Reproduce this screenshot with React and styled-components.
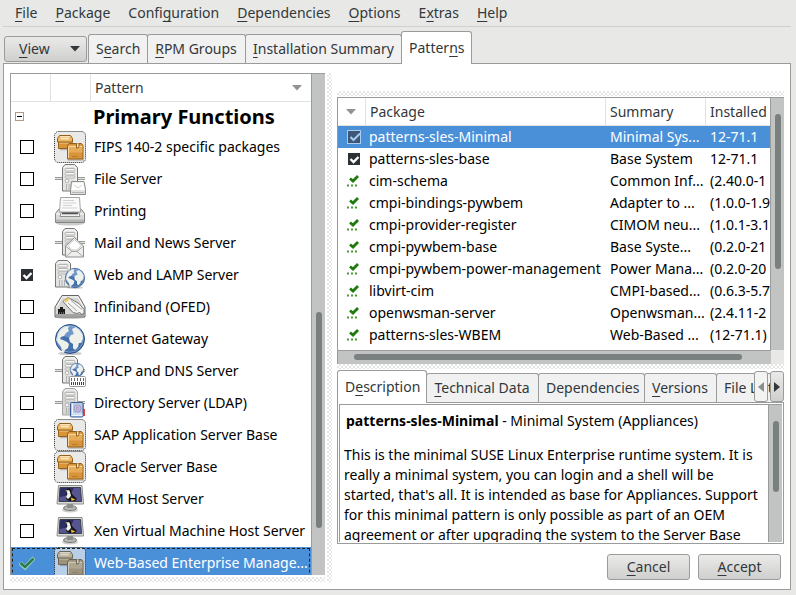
import React, { useState } from "react";
import styled, { createGlobalStyle, css } from "styled-components";

const line = "#9a9c9b";
const grey = "#e8e8e6";
const blue = "#4a90d9";
const ink = "#32383b";

const Global = createGlobalStyle`
  * { box-sizing: border-box; }
  body { margin: 0; background: ${grey}; }
  body, button, input { font: 14px/20px "Noto Sans", "Open Sans", sans-serif; }
  table { border-collapse: separate; border-spacing: 0; table-layout: fixed; width: 100%; }
  u { text-decoration: underline; text-decoration-thickness: 1px; text-underline-offset: 3px; text-decoration-skip-ink: none; }
`;

const Window = styled.div`
  display: flex;
  flex-direction: column;
  height: 100vh;
  padding: 0 5px 5px 3px;
  color: ${ink};
`;

const MenuBar = styled.nav`
  display: flex;
  align-items: flex-start;
  height: 27px;
  flex: none;
  padding: 3px 0 0 3px;
  border-bottom: 1px solid #d0d0ce;
`;

const MenuItem = styled.button`
  height: 20px;
  border: 0;
  padding: 0 9px;
  background: none;
  color: ${ink};
`;

const TabBar = styled.div`
  display: flex;
  align-items: flex-end;
  flex: none;
  height: 37px;
  margin-bottom: -1px;
  position: relative;
`;

const Tab = styled.button`
  flex: none;
  height: ${(p) => (p.$active ? 33 : 29)}px;
  margin-bottom: ${(p) => (p.$active ? 0 : 1)}px;
  margin-left: -1px;
  padding: 0 8px 0 7px;
  border: 1px solid ${line};
  border-bottom: 0;
  border-radius: 3px 3px 0 0;
  background: ${(p) => (p.$active ? "#fff" : "#f1f1f1")};
  color: ${ink};
  white-space: nowrap;
  width: ${(p) => (p.$w ? p.$w + "px" : "auto")};
`;

const raised = css`
  border: 1px solid ${line};
  border-radius: 3px;
  background: linear-gradient(#eaeae9, #cfcfcd);
  color: ${ink};
`;

const ViewButton = styled.button`
  ${raised}
  display: flex;
  align-items: center;
  justify-content: space-between;
  width: 83px;
  height: 26px;
  margin: 0 2px 2px 1px;
  padding: 0 6px 0 14px;
`;

const PushButton = styled.button`
  ${raised}
  width: 83px;
  height: 26px;
  padding: 0;
`;

const Panel = styled.main`
  flex: 1;
  min-height: 0;
  display: flex;
  padding: 9px 6px 7px;
  border: 1px solid ${line};
  background: #fff;
`;

const dots = css`
  background-color: #e6e6e4;
  background-image: radial-gradient(circle at 1px 1px, #fff 1px, transparent 1px),
    radial-gradient(circle at 1px 1px, #fff 1px, transparent 1px);
  background-size: 4px 4px;
  background-position: 0 0, 2px 2px;
`;

const Grip = styled.div`
  ${dots}
  flex: none;
  height: 5px;
`;

const SplitHandle = styled.div`
  ${dots}
  flex: none;
  width: 5px;
  margin: 0 5px 0 2px;
`;

const LeftPane = styled.section`
  display: flex;
  flex-direction: column;
  flex: 0 0 41%;
  max-width: 315px;
  gap: 2px;
`;

const ListFrame = styled.div`
  display: flex;
  flex: 1;
  min-height: 0;
  border-top: 1px solid ${line};
  border-left: 1px solid ${line};
`;

const ListBody = styled.div`
  flex: 1;
  min-width: 0;
  overflow: hidden;
  color: #000;
`;

const VTrack = styled.div`
  display: flex;
  flex-direction: column;
  align-items: center;
  flex: none;
  width: 14px;
  border-left: 1px solid ${line};
  background: #c2c4c3;
  padding-top: ${(p) => p.$from}px;
`;

const VThumb = styled.div`
  width: 6px;
  height: ${(p) => p.$size}px;
  border-radius: 3px;
  background: #7a7f7f;
`;

const HRow = styled.div`
  display: flex;
  flex: none;
  height: 14px;
  border-left: 1px solid ${line};
`;

const HTrack = styled.div`
  flex: 1;
  padding: 3px 29px 0 16px;
  border-top: 1px solid ${line};
  background: #c2c4c3;
`;

const HThumb = styled.div`
  height: 6px;
  border-radius: 3px;
  background: #7a7f7f;
`;

const Corner = styled.div`
  width: 13px;
  background: ${grey};
`;

const Th = styled.th`
  height: 28px;
  padding: 0 0 0 4px;
  border-right: 1px solid #e2e2e0;
  border-bottom: 1px solid #e2e2e0;
  font-weight: 400;
  text-align: left;
  color: ${ink};
  white-space: nowrap;
  &:last-child { border-right: 0; }
`;

const HeadFlex = styled.div`
  display: flex;
  align-items: center;
  justify-content: space-between;
  padding-right: ${(p) => p.$right}px;
`;

const PatternRow = styled.tr`
  height: 32px;
  ${(p) => p.$on && css`background: ${blue}; color: #fff; outline: 1px dashed #222; outline-offset: -2px;`}
`;

const GroupRow = styled.tr`
  height: 29px;
`;

const GroupName = styled.td`
  padding: 0 0 0 2px;
  font: 700 20px/28px "Noto Sans", "Open Sans", sans-serif;
  white-space: nowrap;
`;

const Cell = styled.td`
  height: inherit;
  padding: 0 0 0 ${(p) => p.$left || 3}px;
  white-space: nowrap;
  svg { display: block; }
`;

const PackageRow = styled.tr`
  height: 22px;
  ${(p) => p.$on && css`background: ${blue}; color: #fff;`}
`;

const Check = styled.label`
  display: grid;
  width: 16px;
  height: 16px;
  place-items: center;
  input, svg { grid-area: 1 / 1; }
  svg { pointer-events: none; }
`;

const Box = styled.input`
  appearance: none;
  width: 14px;
  height: 14px;
  margin: 0;
  ${(p) => p.$kind === "box" && css`
    border: 1px solid #000;
    background: #fff;
    &:checked { border-color: #fff; background: #2b3135; }
  `}
  ${(p) => p.$kind === "boxOn" && css`
    border: 1px solid #a9cdf2;
    background: #3d5877;
  `}
`;

const Expander = styled.button`
  display: grid;
  place-items: center;
  width: 9px;
  height: 9px;
  margin-left: 1px;
  padding: 0;
  border: 1px solid #b09a80;
  background: #fff;
`;

const Minus = styled.span`
  width: 5px;
  height: 1px;
  background: #000;
`;

const RightPane = styled.section`
  display: flex;
  flex-direction: column;
  flex: 1;
  min-width: 0;
  padding: 18px 0 0;
`;

const TableFrame = styled(ListFrame)`
  margin-top: 1px;
`;

const DetailTabs = styled.div`
  display: flex;
  align-items: flex-end;
  flex: none;
  height: 33px;
  margin: 1px 0 -1px;
  padding-left: 1px;
  overflow: hidden;
  position: relative;
`;

const TabArrows = styled.div`
  position: absolute;
  right: 0;
  top: 1px;
  display: flex;
  gap: 2px;
`;

const ArrowButton = styled.button`
  ${raised}
  display: grid;
  place-items: center;
  width: 14px;
  height: 31px;
  padding: 0;
  &:disabled { background: #f3f3f2; }
`;

const DetailFrame = styled.div`
  display: flex;
  flex: none;
  height: 142px;
  padding: 1px;
  border: 1px solid ${line};
`;

const DetailInner = styled.article`
  display: flex;
  flex: 1;
  min-width: 0;
  border-top: 1px solid ${line};
  border-left: 1px solid ${line};
  color: #000;
`;

const DetailText = styled.div`
  flex: 1;
  overflow: hidden;
  padding: 6px 0 0 4px;
  white-space: nowrap;
  p { margin: 0; }
`;

const DetailTitle = styled.p`
  && { padding: 0 0 0 2px; margin-bottom: 14px; }
`;

const Actions = styled.footer`
  display: flex;
  justify-content: flex-end;
  gap: 8px;
  flex: none;
  padding: 10px 3px 2px;
`;

const Down = ({ c = ink }) => (
  <svg width="10" height="6" viewBox="0 0 10 6"><path d="M0 0h10L5 5.5z" fill={c} /></svg>
);

const Side = ({ left }) => (
  <svg width="6" height="10" viewBox="0 0 6 10">
    <path d={left ? "M6 0v10L0 5z" : "M0 0v10l6-5z"} fill={left ? "#8a8e8f" : ink} />
  </svg>
);

const marks = {
  box: <svg width="14" height="14"><path d="M3.5 7l3 3 5-5" fill="none" stroke="#fff" strokeWidth="2.4" /></svg>,
  boxOn: <svg width="14" height="14"><path d="M3.5 7l3 3L13 3.500" fill="none" stroke="#a9cdf2" strokeWidth="2" /></svg>,
  auto: (
    <svg width="16" height="16">
      <path d="M4 5.500L7 8l5-5" fill="none" stroke="#1f7a0c" strokeWidth="2.800" />
      <path d="M1 11.500h2v2h-2zM5 11.500h2v2h-2zM9 11.500h2v2h-2z" fill="#4a9a35" />
    </svg>
  ),
  green: (
    <svg width="16" height="16">
      <path d="M1 8l5 4.500L15 3" fill="none" stroke="#a5d8c4" strokeWidth="4" />
      <path d="M1.500 8L6 12l8.500-8.500" fill="none" stroke="#2a7c4c" strokeWidth="2.500" />
    </svg>
  ),
};

function Tick({ kind, on, label }) {
  const [checked, setChecked] = useState(on);
  return (
    <Check>
      <Box type="checkbox" $kind={kind} checked={checked} aria-label={label} onChange={() => setChecked(!checked)} />
      {checked && marks[kind]}
    </Check>
  );
}

function PackageIcon({ dull }) {
  const [dark, mid, lite, hi] = dull
    ? ["#6b6554", "#9d937d", "#b9b09c", "#d8d2c5"]
    : ["#94601a", "#d9943a", "#ecb868", "#fbe3b4"];
  return (
    <>
      <rect x="0.5" y="0.5" width="31" height="31" rx="4" fill={dull ? "#b9cfe8" : "#e9e9e8"} stroke="#222" strokeDasharray="1 1" />
      <path d="M6 18.500h8M14 29h16" stroke="#000" strokeWidth="1.500" opacity="0.2" />
      <g stroke={dark}>
        <path d="M4.500 10.500h13.500v7H4.500z" fill={mid} />
        <path d="M5 12h12.500" stroke={hi} opacity="0.7" />
        <path d="M3.500 7.500L5.500 4.500h11l2 3v3.500h-15z" fill={lite} />
        <path d="M6 5.500h10" stroke={hi} />
        <path d="M6.500 7.500h8.500" stroke={hi} strokeWidth="2" />
        <path d="M13.500 14.500l1.500-2h12.500l1.500 2v13.500H13.500z" fill={mid} />
        <path d="M14 14.500h14.500v7H14z" fill={lite} stroke="none" opacity="0.65" />
        <path d="M14.500 15.500h13.500M14.500 16v11" fill="none" stroke={hi} opacity="0.8" />
        <path d="M22.500 12.500v4.500h1.500l1-1.500v-3" fill={hi} />
        <path d="M18 25.500h6" stroke={dark} opacity="0.45" />
      </g>
    </>
  );
}

const Cable = () => (
  <>
    <path d="M1 15.500h30" stroke="#999b99" strokeWidth="3" />
    <path d="M1 15.500h30" stroke="#e2e3e1" />
  </>
);

function Tower({ x = 8, pale }) {
  const edge = pale ? "#a5a7a5" : "#747674";
  return (
    <g transform={`translate(${x} 1)`}>
      <path d="M.5 3.500L3 .5h9.500l3 3V27H.5z" fill={pale ? "#d5d6d4" : "#e4e5e3"} stroke={edge} />
      <path d="M2 4l2-2h8l2 2v21" fill="none" stroke="#fafafa" />
      <g fill="#f7f7f6" stroke="#b3b5b2">
        <rect x="3" y="4.500" width="10" height="2.500" rx="1" />
        <rect x="3" y="8.500" width="10" height="2.500" rx="1" />
        <rect x="3" y="12" width="10" height="2" rx="1" />
        <circle cx="5" cy="17" r="1.800" />
      </g>
      <path d="M4.500 20v6M7 20v6M9.500 20v6" stroke="#b0b2af" />
    </g>
  );
}

function Globe({ cx, cy, r }) {
  const k = r / 15;
  return (
    <g transform={`translate(${cx} ${cy}) scale(${k})`}>
      <ellipse cx="0" cy="14.500" rx="12" ry="2" fill="#000" opacity="0.2" />
      <circle r="14.500" fill="#4470ac" stroke="#2b4f85" />
      <path d="M-13-4A13.500 13.500 0 0 1 13-4Q5 1 0-1T-13-4" fill="#8fb0dc" opacity="0.6" />
      <path d="M-12-6q2-5 7-7l4 0-1 3 1 2-3 2-2 3-3 1-1 2 3 1 4 2 2 2-1 4-3 2-1 3-2-1-1-5-3-4-2-3z" fill="#eef0ec" />
      <path d="M2-10l4-2 4 3 3 5v4l-2 4-2 0-1 4-3 3-2-2 0-4-3-2-1-4 2-3 3-1-1-2z" fill="#eef0ec" />
      <circle r="13.200" fill="none" stroke="#a9c4e6" opacity="0.5" />
    </g>
  );
}

const Screen = () => (
  <>
    <ellipse cx="16" cy="27" rx="8" ry="2.500" fill="#555" opacity="0.3" />
    <ellipse cx="16" cy="25" rx="6.500" ry="2.500" fill="#b5b8b3" stroke="#777a76" />
    <path d="M13 21h6v4h-6z" fill="#8c8f8b" />
    <path d="M4.500 2.500h23.500l1.500 18.500h-26.500z" fill="#d9dbd7" stroke="#8d908c" />
    <path d="M6 4.500h20.500l1 14H5z" fill="#2d2d66" stroke="#3c3e50" />
    <path d="M6 14Q17 13 20 5h6l1 13H5.500z" fill="#6668a2" opacity="0.7" />
    <path d="M13 6q3-2 4 1l1 4 5 5-2 2h-6l-3-2z" fill="#16161b" />
    <path d="M12.500 8l2.500-1 1 2 1 4-3 3-2-2 1.500-3z" fill="#f2f2ee" />
    <path d="M11 7.500l3-.5v1.500zM17 14.500l4.500 2-4 1.500z" fill="#eebc34" />
  </>
);

const icons = {
  pkg: <PackageIcon />,
  dull: <PackageIcon dull />,
  file: (
    <>
      <Cable /><Tower />
      <path d="M17.500 18.500h12.500l1.500 8v5h-15v-5z" fill="#e0e1df" stroke="#8a8c8a" />
      <path d="M18.500 19.500h11l1 7.500h-13z" fill="#fff" />
      <path d="M20 22l4 3 4-3" fill="none" stroke="#cfd1cf" />
      <path d="M18 29.500h12" stroke="#b5b7b5" />
    </>
  ),
  print: (
    <>
      <ellipse cx="16" cy="28.500" rx="14" ry="2" fill="#000" opacity="0.2" />
      <path d="M4 15l3-2h18l3 2 2.500 3.500v9h-29v-9z" fill="#d9dad8" stroke="#858785" />
      <path d="M6.500 2.500h19l1 14.500h-21z" fill="#fafafa" stroke="#a3a5a3" />
      <path d="M9 5.500h11M9 8h13M9 10.500h9M8 13h15" stroke="#d0d2d0" />
      <path d="M2.500 19h27" stroke="#fff" />
      <path d="M7 17.500h18l1 4H6z" fill="#efefee" stroke="#8d8f8d" />
      <path d="M8 18.500h16" stroke="#505250" strokeWidth="1.500" />
      <path d="M2 24.500h28v2.500H2z" fill="#b3b5b3" />
    </>
  ),
  mail: (
    <>
      <Cable /><Tower />
      <path d="M11.500 19l9-8.500 9 8.500v11h-18z" fill="#eeefed" stroke="#8d8f8d" />
      <path d="M14 18.500l6.500-6 6.500 6-3.500 4.500h-6z" fill="#fff" stroke="#c9cbc9" />
      <path d="M12 19.500l6 5h5l6-5M12 29.500l6.500-5.500M29 29.500L22.500 24" fill="none" stroke="#a5a7a5" />
    </>
  ),
  web: (
    <><Tower x={1} /><Globe cx={21} cy={19} r={10} /></>
  ),
  net: (
    <>
      <ellipse cx="16" cy="26" rx="15" ry="2" fill="#000" opacity="0.2" />
      <path d="M1 16L8 4.500h16.500L31 16v10H1z" fill="#d6d7d4" stroke="#646664" />
      <path d="M2.500 16.500L8.500 6h15.500l5.500 10" fill="none" stroke="#fff" />
      <path d="M2 23h28v2H2z" fill="#a3a5a2" />
      <path d="M4 23v-5h2v-2h3v2h2v5z" fill="#1c1e1c" />
      <path d="M5 22h6" stroke="#c9a63a" strokeDasharray="1 1" />
      <path d="M9 10.500l5-4 11 6 5 6v4l-3 1-1-2-3 1-4-1z" fill="#f4f4f2" stroke="#777977" />
      <path d="M14 12l9 8M17 9.500l11 9" fill="none" stroke="#a5a7a5" />
      <path d="M10 9.500l4-3 2 1.500-4 3.500z" fill="#f0c85f" />
    </>
  ),
  globe: <Globe cx={16} cy={16} r={15} />,
  dhcp: (
    <>
      <Cable /><Tower />
      <Globe cx={23} cy={15} r={7} />
      <rect x="15.5" y="21.5" width="16" height="10" rx="1" fill="#fff" stroke="#9a9c9a" />
      <path d="M17 24.500h13" stroke="#666" strokeWidth="3" strokeDasharray="1 2" />
      <path d="M17 28.500h13" stroke="#444" strokeWidth="3" strokeDasharray="1 1" />
    </>
  ),
  dir: (
    <>
      <Cable /><Tower pale />
      <path d="M28 18h2v4h1v7h-3z" fill="#dd4147" />
      <path d="M28 17h2v5h-2z" fill="#8cb857" />
      <rect x="16.5" y="15.5" width="12.5" height="14.5" rx="1" fill="#b3cce9" stroke="#3e5e91" />
      <path d="M18.500 16.500v10.500h10M17.500 28.500h11" fill="none" stroke="#edf4fb" />
      <circle cx="23.5" cy="21.500" r="3.500" fill="none" stroke="#b58fbf" />
      <circle cx="23.5" cy="21.500" r="1.300" fill="none" stroke="#b58fbf" />
    </>
  ),
  screen: <Screen />,
};

const Icon = ({ name }) => (
  <svg width="32" height="32" viewBox="0 0 32 32" aria-hidden="true">{icons[name]}</svg>
);

const patterns = [
  ["FIPS 140-2 specific packages", "pkg"],
  ["File Server", "file"],
  ["Printing", "print"],
  ["Mail and News Server", "mail"],
  ["Web and LAMP Server", "web", true],
  ["Infiniband (OFED)", "net"],
  ["Internet Gateway", "globe"],
  ["DHCP and DNS Server", "dhcp"],
  ["Directory Server (LDAP)", "dir"],
  ["SAP Application Server Base", "pkg"],
  ["Oracle Server Base", "pkg"],
  ["KVM Host Server", "screen"],
  ["Xen Virtual Machine Host Server", "screen"],
];

const packages = [
  ["boxOn", "patterns-sles-Minimal", "Minimal Sys...", "12-71.1"],
  ["box", "patterns-sles-base", "Base System", "12-71.1"],
  ["auto", "cim-schema", "Common Inf...", "(2.40.0-1"],
  ["auto", "cmpi-bindings-pywbem", "Adapter to ...", "(1.0.0-1.9"],
  ["auto", "cmpi-provider-register", "CIMOM neu...", "(1.0.1-3.1"],
  ["auto", "cmpi-pywbem-base", "Base Syste...", "(0.2.0-21"],
  ["auto", "cmpi-pywbem-power-management", "Power Mana...", "(0.2.0-20"],
  ["auto", "libvirt-cim", "CMPI-based...", "(0.6.3-5.7"],
  ["auto", "openwsman-server", "Openwsman...", "(2.4.11-2"],
  ["auto", "patterns-sles-WBEM", "Web-Based ...", "(12-71.1)"],
];

export default function App() {
  return (
    <Window>
      <Global />
      <MenuBar>
        <MenuItem><u>F</u>ile</MenuItem>
        <MenuItem><u>P</u>ackage</MenuItem>
        <MenuItem>Confi<u>g</u>uration</MenuItem>
        <MenuItem><u>D</u>ependencies</MenuItem>
        <MenuItem><u>O</u>ptions</MenuItem>
        <MenuItem>E<u>x</u>tras</MenuItem>
        <MenuItem><u>H</u>elp</MenuItem>
      </MenuBar>
      <TabBar>
        <ViewButton><span><u>V</u>iew</span><Down /></ViewButton>
        <Tab $w={60}>S<u>e</u>arch</Tab>
        <Tab $w={99}><u>R</u>PM Groups</Tab>
        <Tab $w={157}><u>I</u>nstallation Summary</Tab>
        <Tab $w={71} $active>Patter<u>n</u>s</Tab>
      </TabBar>
      <Panel>
        <LeftPane>
          <ListFrame>
            <ListBody>
              <table>
                <colgroup><col width="40" /><col width="40" /><col /></colgroup>
                <thead>
                  <tr>
                    <Th aria-label="Status" /><Th aria-label="Icon" />
                    <Th><HeadFlex $right={9}>Pattern<Down c="#8f9392" /></HeadFlex></Th>
                  </tr>
                </thead>
                <tbody>
                  <GroupRow>
                    <Cell><Expander aria-label="Collapse Primary Functions"><Minus /></Expander></Cell>
                    <Cell />
                    <GroupName>Primary Functions</GroupName>
                  </GroupRow>
                  {patterns.map(([name, icon, on]) => (
                    <PatternRow key={name}>
                      <Cell $left={8}><Tick kind="box" on={!!on} label={name} /></Cell>
                      <Cell><Icon name={icon} /></Cell>
                      <Cell>{name}</Cell>
                    </PatternRow>
                  ))}
                  <PatternRow $on>
                    <Cell $left={8}><Tick kind="green" on label="Web-Based Enterprise Management" /></Cell>
                    <Cell><Icon name="dull" /></Cell>
                    <Cell>Web-Based Enterprise Manage...</Cell>
                  </PatternRow>
                </tbody>
              </table>
            </ListBody>
            <VTrack $from={238}><VThumb $size={216} /></VTrack>
          </ListFrame>
          <Grip />
        </LeftPane>
        <SplitHandle />
        <RightPane>
          <Grip />
          <TableFrame>
            <ListBody>
              <table>
                <colgroup><col width="28" /><col /><col width="100" /><col width="64" /></colgroup>
                <thead>
                  <tr>
                    <Th aria-label="Status"><HeadFlex $right={9}><span /><Down c="#8f9392" /></HeadFlex></Th>
                    <Th>Package</Th><Th>Summary</Th><Th>Installed</Th>
                  </tr>
                </thead>
                <tbody>
                  {packages.map(([kind, name, summary, version], i) => (
                    <PackageRow key={name} $on={i === 0}>
                      <Cell $left={8}><Tick kind={kind} on label={name} /></Cell>
                      <Cell>{name}</Cell>
                      <Cell $left={4}>{summary}</Cell>
                      <Cell $left={4}>{version}</Cell>
                    </PackageRow>
                  ))}
                </tbody>
              </table>
            </ListBody>
            <VTrack $from={16}><VThumb $size={155} /></VTrack>
          </TableFrame>
          <HRow><HTrack><HThumb /></HTrack><Corner /></HRow>
          <Grip />
          <DetailTabs>
            <Tab $w={90} $active>D<u>e</u>scription</Tab>
            <Tab $w={113}><u>T</u>echnical Data</Tab>
            <Tab $w={107}>Dependencies</Tab>
            <Tab $w={73}><u>V</u>ersions</Tab>
            <Tab>File List</Tab>
            <TabArrows>
              <ArrowButton disabled aria-label="Previous tabs"><Side left /></ArrowButton>
              <ArrowButton aria-label="More tabs"><Side /></ArrowButton>
            </TabArrows>
          </DetailTabs>
          <DetailFrame>
            <DetailInner>
              <DetailText>
                <DetailTitle><b>patterns-sles-Minimal</b> - Minimal System (Appliances)</DetailTitle>
                <p>
                  This is the minimal SUSE Linux Enterprise runtime system. It is<br />
                  really a minimal system, you can login and a shell will be<br />
                  started, that's all. It is intended as base for Appliances. Support<br />
                  for this minimal pattern is only possible as part of an OEM<br />
                  agreement or after upgrading the system to the Server Base
                </p>
              </DetailText>
              <VTrack $from={16}><VThumb $size={71} /></VTrack>
            </DetailInner>
          </DetailFrame>
          <Actions>
            <PushButton><u>C</u>ancel</PushButton>
            <PushButton><u>A</u>ccept</PushButton>
          </Actions>
        </RightPane>
      </Panel>
    </Window>
  );
}
